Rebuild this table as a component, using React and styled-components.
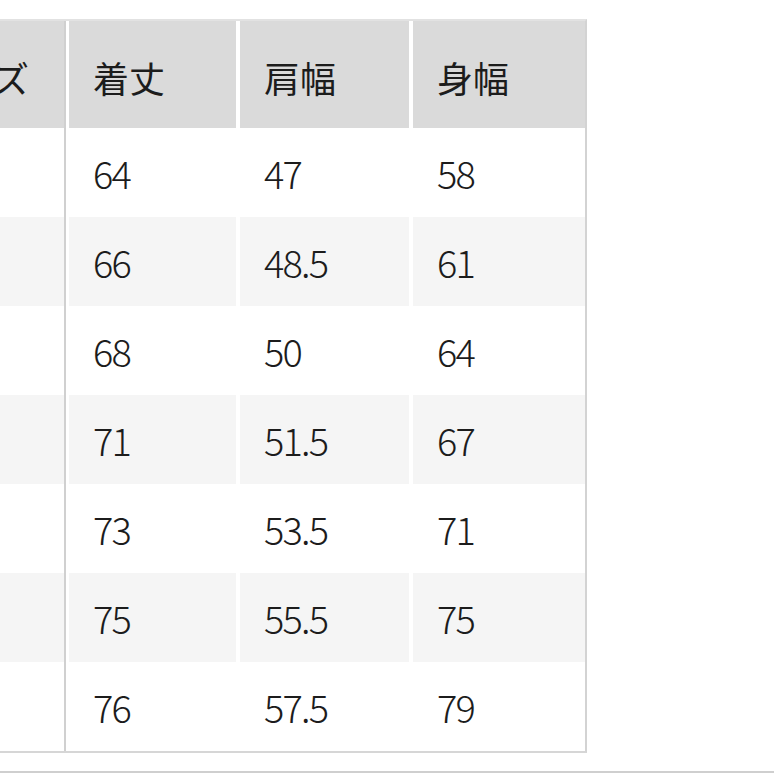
import React from "react";
import styled, { createGlobalStyle } from "styled-components";

const Global = createGlobalStyle`
  html, body { margin: 0; padding: 0; background: #ffffff; overflow: hidden; }
  body { font-family: "Noto Sans CJK JP", "Liberation Sans", sans-serif; color: #1c1c1c; }
`;

const Page = styled.div`
  width: 774px;
  height: 774px;
  overflow: hidden;
  padding-top: 19px;
  box-sizing: border-box;
`;

const Table = styled.div`
  margin-left: -102px;
  width: fit-content;
  border-top: 2px solid #e2e2e2;
  border-right: 2px solid #d3d3d3;
  border-bottom: 2px solid #d6d6d6;
  background: #ffffff;
`;

const Row = styled.div`
  display: flex;
  height: ${(p) => (p.$header ? 107 : 89)}px;
  background: #ffffff;
`;

const Cell = styled.div`
  box-sizing: border-box;
  width: ${(p) => p.$w}px;
  margin-right: ${(p) => (p.$last ? 0 : p.$first ? 3 : 4)}px;
  border-right: ${(p) => (p.$first ? "2px solid #d0d0d0" : "none")};
  background: ${(p) =>
    p.$header ? "#dadada" : p.$stripe ? "#f5f5f5" : "#ffffff"};
  background-clip: padding-box;
  display: flex;
  align-items: center;
  padding-left: 24px;
  padding-top: ${(p) => (p.$header ? 4 : 0)}px;
  font-family: "Noto Sans CJK JP", sans-serif;
  font-size: ${(p) => (p.$header ? 36 : 38)}px;
  font-weight: ${(p) => (p.$header ? 400 : 300)};
  letter-spacing: ${(p) => (p.$header ? "0px" : "-1.8px")};
  white-space: nowrap;
  overflow: hidden;
`;

const Divider = styled.div`
  margin-top: 18px;
  height: 2px;
  background: #cfcfcf;
`;

const widths = [168, 167, 169, 172];
const headers = ["サイズ", "着丈", "肩幅", "身幅"];
const rows = [
  ["XS", "64", "47", "58"],
  ["S", "66", "48.5", "61"],
  ["M", "68", "50", "64"],
  ["L", "71", "51.5", "67"],
  ["XL", "73", "53.5", "71"],
  ["XXL", "75", "55.5", "75"],
  ["3XL", "76", "57.5", "79"],
];

export default function App() {
  return (
    <Page>
      <Global />
      <Table>
        <Row $header>
          {headers.map((h, i) => (
            <Cell
              key={h}
              $header
              $w={widths[i]}
              $first={i === 0}
              $last={i === headers.length - 1}
            >
              {h}
            </Cell>
          ))}
        </Row>
        {rows.map((r, ri) => (
          <Row key={ri}>
            {r.map((v, i) => (
              <Cell
                key={i}
                $w={widths[i]}
                $stripe={ri % 2 === 1}
                $first={i === 0}
                $last={i === r.length - 1}
              >
                {v}
              </Cell>
            ))}
          </Row>
        ))}
      </Table>
      <Divider />
    </Page>
  );
}
